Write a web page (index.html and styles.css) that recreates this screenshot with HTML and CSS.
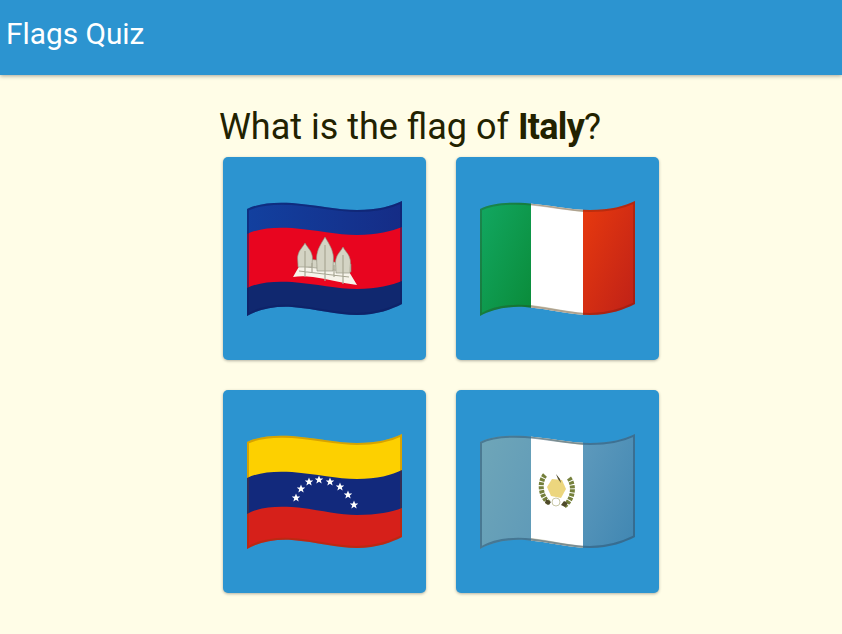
FILE: index.html
```html
<!DOCTYPE html>
<html lang="en">
<head>
<meta charset="utf-8">
<title>Flags Quiz</title>
<link rel="stylesheet" href="styles.css">
</head>
<body>
<header class="app-bar"><span class="app-title">Flags Quiz</span></header>
<main class="quiz">
  <h1 class="question">What is the flag of <strong>Italy</strong>?</h1>
  <div class="options">
    <button class="option" type="button" aria-label="Cambodia">
      <svg class="flag" viewBox="0 -20 155 155">
        <defs>
          <clipPath id="wave"><path d="M0 8c12-6 28-7 45-6 25 2 45 7 65 7 20 0 35-4 45-9v103c-10 5-25 11-45 11-20 0-40-6-65-8-17-1-33 2-45 9z"/></clipPath>
          <path id="outline" d="M0 8c12-6 28-7 45-6 25 2 45 7 65 7 20 0 35-4 45-9v103c-10 5-25 11-45 11-20 0-40-6-65-8-17-1-33 2-45 9z"/>
          <polygon id="star" points="0,-4.400 1.200,-1.400 4.300,-1.400 1.800,.6 2.700,3.600 0,1.800 -2.700,3.600 -1.800,.6 -4.300,-1.400 -1.200,-1.400"/>
          <linearGradient id="kh-top" x1="0" y1="0" x2="1" y2="0"><stop offset="0" stop-color="#12409f"/><stop offset="1" stop-color="#152c86"/></linearGradient>
        </defs>
        <g clip-path="url(#wave)">
          <path class="kh-blue-top" d="M0 0h155v50H0z"/>
          <path class="kh-red" d="M0 33c12-6 28-7 45-6 25 2 45 7 65 7 20 0 35-4 45-8v56c-10 4-25 8-45 8-20 0-40-5-65-7-17-1-33 0-45 6z"/>
          <path class="kh-blue-low" d="M0 87c12-6 28-7 45-6 25 2 45 7 65 7 20 0 35-4 45-8v40H0z"/>
          <path class="temple-base" d="M46 76 54 62 101 69 110 84C95 82 80 78 66 76 58 75 52 75 46 76z"/>
          <path class="temple-tower" d="M52 57 104 63V71L52 65z"/>
          <path class="temple-tower" d="M58 42C60 46 64 49 65 54 66 57 65 60 65 66H51C51 60 50 57 51 54 52 49 56 46 58 42z"/>
          <path class="temple-tower" d="M78 36C81 41 85 47 86 53 87 57 86 60 86 70H70C70 60 69 57 70 53 71 47 75 41 78 36z"/>
          <path class="temple-tower" d="M96 46C98 50 102 53 103 58 104 61 103 64 103 72H89C89 64 88 61 89 58 90 53 94 50 96 46z"/>
          <path class="temple-line" d="M58 50v26M78 44v36M96 54v29M65 62v10M87 64v12M52 70l50 6"/>
          <use href="#outline" class="edge edge-blue"/>
        </g>
      </svg>
    </button>
    <button class="option" type="button" aria-label="Italy">
      <svg class="flag" viewBox="0 -20 155 155">
        <defs>
          <linearGradient id="it-green" x1="0" y1="0" x2="1" y2="1"><stop offset="0" stop-color="#12a862"/><stop offset="1" stop-color="#0a8a38"/></linearGradient>
          <linearGradient id="it-red" x1="0" y1="0" x2="1" y2="1"><stop offset="0" stop-color="#e83a0e"/><stop offset="1" stop-color="#bd2018"/></linearGradient>
        </defs>
        <g clip-path="url(#wave)">
          <rect class="it-green" width="51" height="120"/>
          <rect class="it-white" x="51" width="52" height="120"/>
          <rect class="it-red" x="103" width="52" height="120"/>
          <path class="it-white-edge" d="M51 0H103V11C90 10 70 6 51 4zM51 104C70 106 90 111 103 112V118H51z"/>
          <use href="#outline" class="edge edge-dark"/>
        </g>
      </svg>
    </button>
    <button class="option" type="button" aria-label="Venezuela">
      <svg class="flag" viewBox="0 -20 155 155">
        <g clip-path="url(#wave)">
          <path class="ve-yellow" d="M0 0h155v60H0z"/>
          <path class="ve-blue" d="M0 44c12-6 28-7 45-6 25 2 45 7 65 7 20 0 35-4 45-9v50H0z"/>
          <path class="ve-red" d="M0 80c12-7 28-8 45-7 25 2 45 8 65 8 20 0 35-3 45-7v46H0z"/>
          <g class="ve-stars">
            <use href="#star" x="49" y="64"/><use href="#star" x="54" y="55"/><use href="#star" x="62" y="48"/><use href="#star" x="72" y="46"/>
            <use href="#star" x="83" y="48"/><use href="#star" x="93" y="53"/><use href="#star" x="101" y="61"/><use href="#star" x="107" y="71"/>
          </g>
          <use href="#outline" class="edge edge-yellow"/>
        </g>
      </svg>
    </button>
    <button class="option" type="button" aria-label="Guatemala">
      <svg class="flag" viewBox="0 -20 155 155">
        <defs>
          <linearGradient id="gt-left" x1="0" y1="0" x2="1" y2="1"><stop offset="0" stop-color="#6fa6b8"/><stop offset="1" stop-color="#5f9ab8"/></linearGradient>
          <linearGradient id="gt-right" x1="0" y1="0" x2="1" y2="1"><stop offset="0" stop-color="#5f9abc"/><stop offset="1" stop-color="#3f86b2"/></linearGradient>
        </defs>
        <g clip-path="url(#wave)">
          <rect class="gt-left" width="51" height="120"/>
          <rect class="it-white" x="51" width="52" height="120"/>
          <rect class="gt-right" x="103" width="52" height="120"/>
          <path class="it-white-edge" d="M51 0H103V11C90 10 70 6 51 4zM51 104C70 106 90 111 103 112V118H51z"/>
          <path class="gt-wreath" d="M65 41C59 48 60 62 69 69M89 44C95 52 93 66 84 72"/>
          <path class="gt-scroll" d="M72 45l10 1 4 9-5 9-10-2-4-9z"/>
          <circle class="gt-ball" cx="76" cy="68" r="4"/>
          <path class="gt-rifle" d="M76 40l4 5 1 4-3-4zM66 65l5 3-2 3-4-2zM84 67l4 2-3 4-4-2z"/>
          <use href="#outline" class="edge edge-slate"/>
        </g>
      </svg>
    </button>
  </div>
</main>
</body>
</html>
```
FILE: styles.css
```css
* { box-sizing: border-box; }

html, body {
  margin: 0;
  height: 100%;
}

body {
  background: #fffde7;
  font-family: Roboto, "Liberation Sans", sans-serif;
  overflow: hidden;
}

.app-bar {
  height: 75px;
  padding: 0 6px;
  display: flex;
  align-items: center;
  background: #2c94d0;
  box-shadow: 0 1px 4px rgba(0, 0, 0, .35);
}

.app-title {
  color: #fff;
  font-size: 29.8px;
  position: relative;
  top: -4px;
}

.quiz {
  display: flex;
  flex-direction: column;
  align-items: center;
}

.question {
  margin: 30px 22px 0 0;
  font-size: 36px;
  font-weight: 400;
  line-height: 44px;
  color: #222200;
}

.question strong {
  font-weight: 700;
  letter-spacing: -.7px;
}

.options {
  display: grid;
  grid-template-columns: 203px 203px;
  gap: 30px;
  margin: 8px 0 0 40px;
}

.option {
  width: 203px;
  height: 203px;
  padding: 24px;
  border: 0;
  border-radius: 5px;
  background: #2c94d0;
  box-shadow: 0 1px 3px rgba(0, 0, 0, .3);
}

.flag {
  display: block;
  width: 155px;
  height: 155px;
}

.edge { fill: none; stroke-width: 4; }
.edge-blue { stroke: rgba(12, 30, 100, .5); }
.edge-dark { stroke: rgba(60, 20, 10, .22); }
.edge-yellow { stroke: rgba(130, 60, 0, .3); }
.edge-slate { stroke: rgba(40, 80, 110, .5); }

.kh-blue-top { fill: url(#kh-top); }
.kh-red { fill: #e8051f; }
.kh-blue-low { fill: #10286f; }
.temple-base { fill: #f6f4ea; }
.temple-tower { fill: #d4d4c4; stroke: #8f8f7c; stroke-width: .6; }
.temple-line { fill: none; stroke: #a8a794; stroke-width: 1.2; }

.it-green { fill: url(#it-green); }
.it-white { fill: #fff; }
.it-red { fill: url(#it-red); }
.it-white-edge { fill: #cfcbb5; }

.ve-yellow { fill: #fdd000; }
.ve-blue { fill: #12297c; }
.ve-red { fill: #d6201a; }
.ve-stars { fill: #fff; }

.gt-left { fill: url(#gt-left); }
.gt-right { fill: url(#gt-right); }
.gt-wreath { fill: none; stroke: #75803c; stroke-width: 5; stroke-dasharray: 3 1; }
.gt-scroll { fill: #ecd67e; }
.gt-ball { fill: #fff; stroke: #c9c8a8; stroke-width: 1; }
.gt-rifle { fill: #4f4a2a; }
```
